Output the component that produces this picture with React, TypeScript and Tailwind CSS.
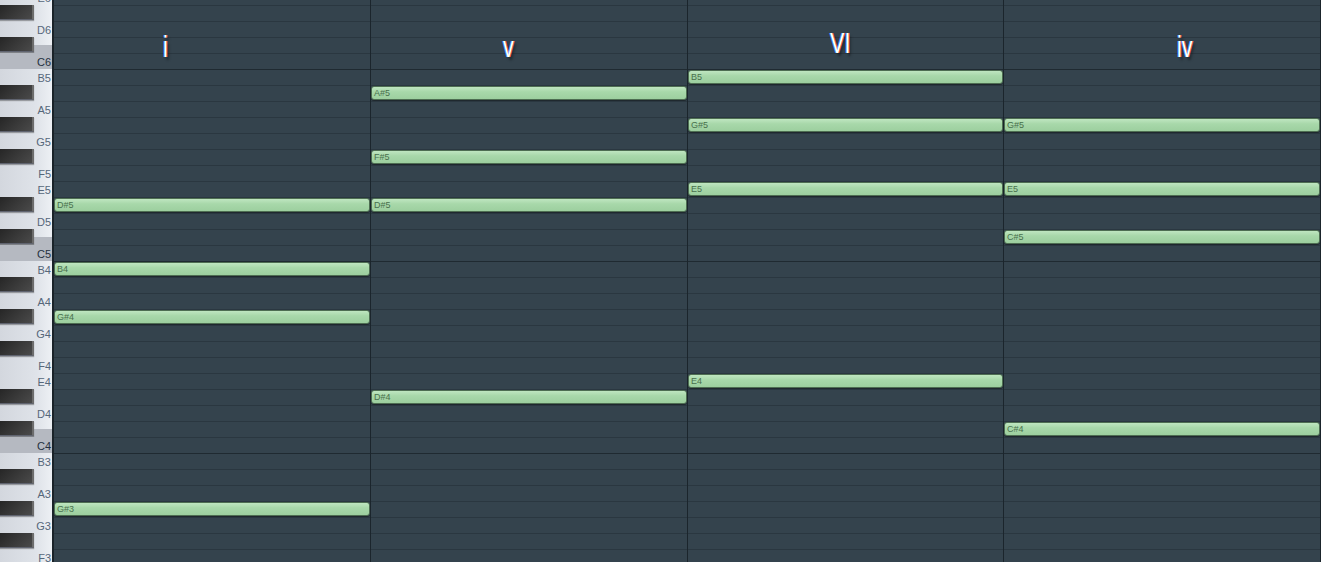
import React from "react";

const NAMES = ["C", "C#", "D", "D#", "E", "F", "F#", "G", "G#", "A", "A#", "B"];
const name = (p: number) => NAMES[p % 12] + (Math.floor(p / 12) - 1);
const isBlack = (p: number) => [1, 3, 6, 8, 10].includes(p % 12);

const PITCHES: number[] = [];
for (let p = 88; p >= 53; p--) PITCHES.push(p);

const BARS = [
  { title: "i", notes: [75, 71, 68, 56], w: "w-[316px]", tl: "left-[109px] top-[32px]" },
  { title: "v", notes: [82, 78, 75, 63], w: "w-[317px]", tl: "left-[132px] top-[32px]" },
  { title: "VI", notes: [83, 80, 76, 64], w: "w-[316px]", tl: "left-[142px] top-[28px]" },
  { title: "iv", notes: [80, 76, 73, 61], w: "w-[318px]", tl: "left-[173px] top-[32px]" },
];

function KeyRow({ p }: { p: number }) {
  const n = p % 12;
  const bg =
    n === 0
      ? "bg-[#b5b9c1]"
      : n === 1
      ? "bg-[linear-gradient(to_bottom,transparent_50%,#b5b9c1_50%)]"
      : "";
  const black = isBlack(p);
  return (
    <div className={`relative h-[16px] flex items-center justify-end ${bg}`}>
      {black && (
        <div className="absolute left-0 top-0 h-[15px] w-[34px] bg-[linear-gradient(135deg,#262626,#3a3a3a_55%,#4a4a4a)] border-r-[2px] border-r-[#6c6c6c] border-b border-b-[#606470] shadow-[0_1px_1px_rgba(0,0,0,0.3)]" />
      )}
      {!black && (
        <span
          className={`pr-[1px] pt-[3px] text-[11px] leading-none font-['Liberation_Sans',sans-serif] ${
            n === 0 ? "text-[#253140]" : "text-[#56677a]"
          }`}
        >
          {name(p)}
        </span>
      )}
    </div>
  );
}

function Bar({ bar, first, last }: { bar: (typeof BARS)[number]; first: boolean; last: boolean }) {
  return (
    <div
      className={`relative ${bar.w} shrink-0 ${first ? "" : "border-l border-l-[#1b252c]"} ${
        last ? "border-r border-r-[#1b252c]" : ""
      }`}
    >
      <div className="mt-[-11px]">
        {PITCHES.map((p) => (
          <div
            key={p}
            className={`h-[16px] border-t ${p % 12 === 11 ? "border-t-[#1f2a31]" : "border-t-[#2a3740]"}`}
          >
            {bar.notes.includes(p) && (
              <div className="h-[14px] rounded-[3px] border border-[#4e6e52] bg-[linear-gradient(to_bottom,#bfe6c0,#a8d8aa_40%,#9dcf9f)] shadow-[0_1px_1px_rgba(0,0,0,0.45)] flex items-center">
                <span className="pl-[2px] text-[9px] leading-none text-[#49704d] font-['Liberation_Sans',sans-serif]">
                  {name(p)}
                </span>
              </div>
            )}
          </div>
        ))}
      </div>
      <div
        className={`absolute ${bar.tl} origin-left scale-x-[0.72] text-[30px] leading-[30px] text-white font-['Liberation_Sans',sans-serif] [text-shadow:-1px_0_#3f8fff,1px_0_#ff5a40,3px_3px_3px_rgba(0,0,0,0.4)]`}
      >
        {bar.title}
      </div>
    </div>
  );
}

export default function App() {
  return (
    <div className="w-[1321px] h-[562px] overflow-hidden flex bg-[#34434d]">
      <div className="w-[52px] shrink-0 overflow-hidden bg-[linear-gradient(to_right,#d3d7de,#dfe3e9_70%,#edf0f4)]">
        <div className="mt-[-11px]">
          {PITCHES.map((p) => (
            <KeyRow key={p} p={p} />
          ))}
        </div>
      </div>
      <div className="w-[2px] shrink-0 bg-[#1a2329]" />
      <div className="flex overflow-hidden bg-[#34434d]">
        {BARS.map((b, i) => (
          <Bar key={i} bar={b} first={i === 0} last={i === BARS.length - 1} />
        ))}
      </div>
    </div>
  );
}
